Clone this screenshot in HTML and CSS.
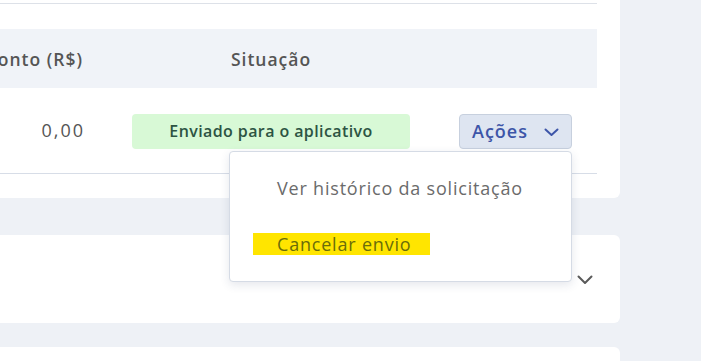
FILE: index.html
```html
<!DOCTYPE html>
<html lang="pt-BR">
<head>
<meta charset="utf-8">
<link rel="stylesheet" href="styles.css">
</head>
<body>
<div class="page">
  <main class="column">
    <section class="card card-table">
      <div class="table">
        <div class="row head">
          <div class="cell c-value"><span>Desconto (R$)</span></div>
          <div class="cell c-status">Situação</div>
          <div class="cell c-actions"></div>
        </div>
        <div class="row body">
          <div class="cell c-value"><span>0,00</span></div>
          <div class="cell c-status"><span class="badge">Enviado para o aplicativo</span></div>
          <div class="cell c-actions">
            <button class="btn-actions">Ações
              <svg width="15" height="9" viewBox="0 0 15 9"><path d="M1.5 1.5 L7.5 7 L13.5 1.5" fill="none" stroke="#3d55a8" stroke-width="2" stroke-linecap="round" stroke-linejoin="round"/></svg>
            </button>
            <div class="menu">
              <div class="menu-item">Ver histórico da solicitação</div>
              <div class="menu-item hl"><span class="mark">Cancelar envio</span></div>
            </div>
          </div>
        </div>
      </div>
    </section>
    <section class="card card-collapsed">
      <svg class="chev" width="16" height="10" viewBox="0 0 16 10"><path d="M1.5 1.5 L8 8 L14.5 1.5" fill="none" stroke="#5a5a5a" stroke-width="2" stroke-linecap="round" stroke-linejoin="round"/></svg>
    </section>
    <section class="card card-next"></section>
  </main>
</div>
</body>
</html>
```
FILE: styles.css
```css
* { box-sizing: border-box; }
html, body { margin: 0; padding: 0; }
body {
  background: #eef1f6;
  font-family: "Open Sans", "DejaVu Sans", sans-serif;
  width: 701px;
  height: 361px;
  overflow: hidden;
}
.page { display: flex; }
.column {
  width: 620px;
  display: flex;
  flex-direction: column;
}
.card {
  background: #fff;
  border-radius: 0 6px 6px 0;
}
.card-table {
  padding: 3px 23px 24px 0;
  border-radius: 0 0 6px 0;
}
.table {
  border-top: 1px solid #dde1e8;
  padding-top: 25px;
}
.row {
  display: grid;
  grid-template-columns: 83px 278px 113px;
  column-gap: 49px;
  align-items: center;
}
.head {
  height: 59px;
  background: #f0f3f8;
  color: #555;
  font-size: 17.5px;
  font-weight: 600;
  letter-spacing: 1px;
}
.body {
  height: 86px;
  border-bottom: 1px solid #d7dde7;
  align-items: start;
  padding-top: 26px;
}
.c-value {
  display: flex;
  justify-content: flex-end;
  white-space: nowrap;
}
.head .c-value { letter-spacing: 1px; }
.body .c-value {
  font-size: 18px;
  color: #555;
  padding-top: 4px;
  letter-spacing: 2px;
  margin-right: -2px;
}
.c-status { text-align: center; }
.badge {
  display: block;
  height: 35px;
  line-height: 35px;
  background: #d8f9d6;
  border-radius: 4px;
  color: #2d5443;
  font-size: 16px;
  font-weight: 600;
  letter-spacing: 0.4px;
}
.c-actions { position: relative; }
.btn-actions {
  width: 113px;
  height: 35px;
  background: #dee5f1;
  border: 1px solid #c7d0de;
  border-radius: 4px;
  color: #3d55a8;
  font-family: inherit;
  font-size: 18px;
  font-weight: 600;
  letter-spacing: 1px;
  display: flex;
  align-items: center;
  justify-content: center;
  gap: 16px;
  padding: 0 0 2px 0;
}
.btn-actions svg { margin-top: 3px; }
.menu {
  position: absolute;
  top: 37px;
  right: 0;
  width: 343px;
  height: 131px;
  background: #fff;
  border: 1px solid #d5dbe5;
  border-radius: 4px;
  box-shadow: 0 3px 10px rgba(40, 60, 100, 0.12);
  padding-top: 25px;
  z-index: 2;
}
.menu-item {
  padding: 0 10px 0 47px;
  font-size: 18px;
  letter-spacing: 0.8px;
  color: #6b6b6b;
  line-height: 22px;
  height: 22px;
  white-space: nowrap;
}
.menu-item.hl {
  margin-top: 34px;
  padding-left: 23px;
}
.mark {
  display: inline-block;
  background: #ffe500;
  color: #6a6d0a;
  padding: 0 19px 0 24px;
  height: 22px;
}
.card-collapsed {
  margin-top: 37px;
  height: 88px;
  position: relative;
  display: flex;
  justify-content: flex-end;
  align-items: center;
  padding-right: 27px;
}
.chev { margin-top: 2px; }
.card-next {
  margin-top: 24px;
  height: 40px;
}
```
